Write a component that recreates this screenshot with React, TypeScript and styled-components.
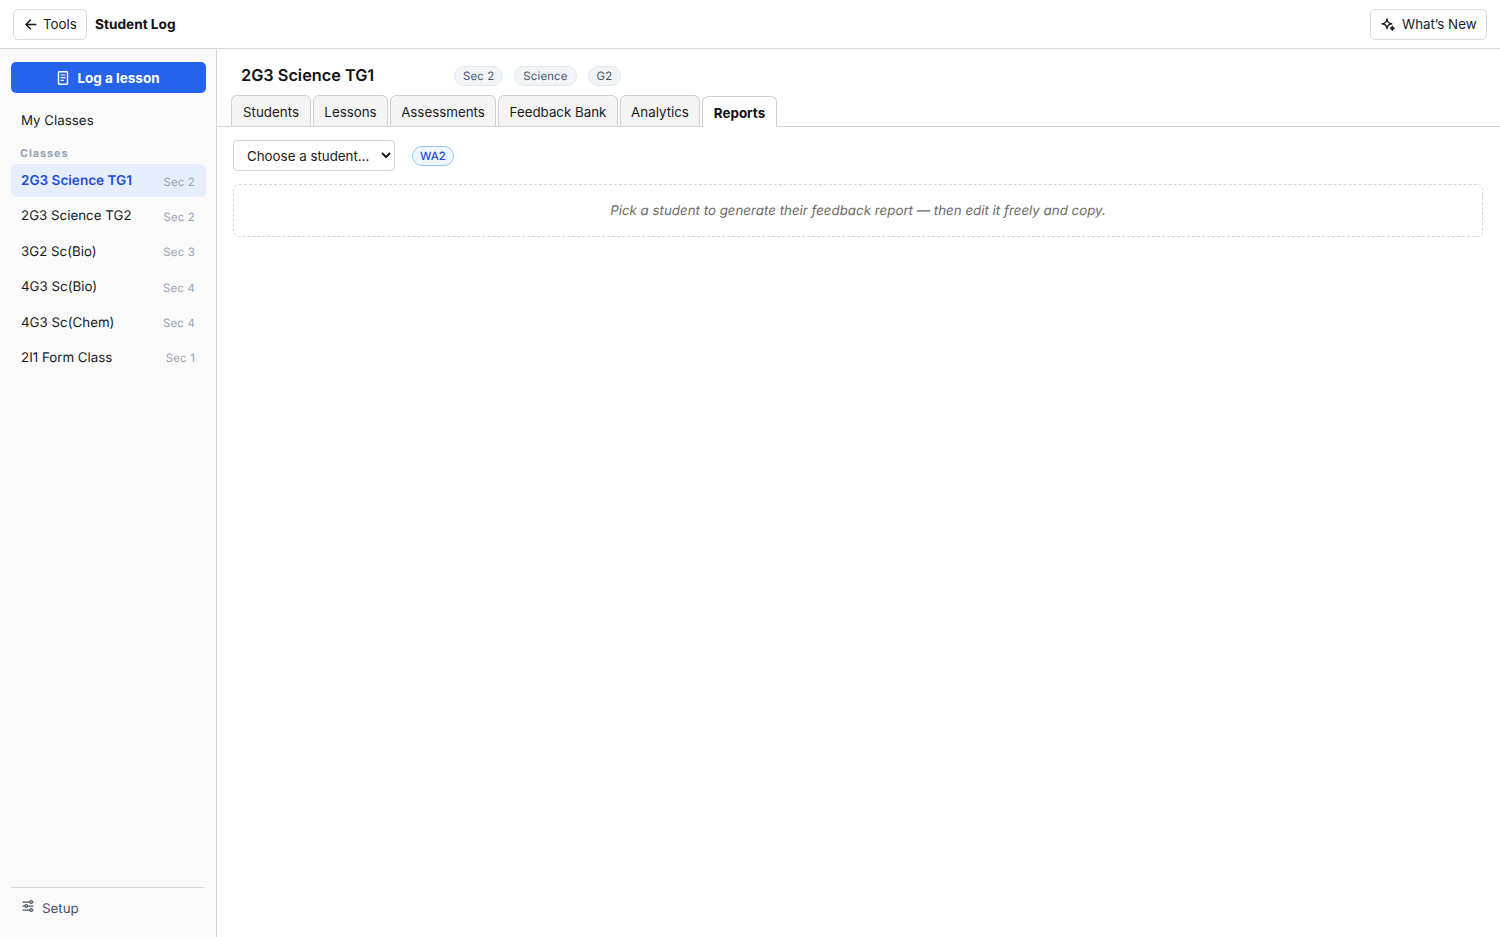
import React from 'react';
import styled, { createGlobalStyle, css } from 'styled-components';

const GlobalStyle = createGlobalStyle`
  *, *::before, *::after { box-sizing: border-box; }
  html, body, #root { height: 100%; }
  body {
    margin: 0;
    background: #fff;
    color: #1a1a1a;
    font-family: Inter, "Liberation Sans", sans-serif;
    font-size: 13.33px;
    line-height: 20px;
    text-rendering: geometricPrecision;
    overflow: hidden;
  }
  button, select { font: inherit; color: inherit; margin: 0; }
`;

const Page = styled.div`
  display: flex;
  flex-direction: column;
  height: 100%;
`;

const TopBar = styled.header`
  display: flex;
  align-items: center;
  flex: none;
  height: 49px;
  padding: 0 13px;
  border-bottom: 1px solid #d9d9d9;
`;

const OutlineButton = styled.button<{ $width: number; $gap: number }>`
  display: flex;
  align-items: center;
  width: ${(p) => p.$width}px;
  height: 31px;
  padding: 0 0 0 10px;
  gap: ${(p) => p.$gap}px;
  border: 1px solid #d9d9d9;
  border-radius: 5px;
  background: #fff;
  white-space: nowrap;
  svg { flex: none; }
`;

const AppTitle = styled.h1`
  flex: 1;
  margin: 0 0 0 8px;
  padding-top: 2px;
  font-size: 13.65px;
  font-weight: 700;
  color: #111;
`;

const Body = styled.div`
  display: flex;
  flex: 1;
  min-height: 0;
`;

const Sidebar = styled.aside`
  display: flex;
  flex-direction: column;
  flex: none;
  width: 217px;
  padding: 13px 11px 12px 11px;
  background: #fafafa;
  border-right: 1px solid #d5d5d5;
`;

const PrimaryButton = styled.button`
  display: flex;
  align-items: center;
  justify-content: center;
  flex: none;
  gap: 8px;
  width: 195px;
  height: 31px;
  padding: 0;
  border: 0;
  border-radius: 5px;
  background: #2563eb;
  color: #fff;
  font-size: 13.5px;
  font-weight: 700;
`;

const NavLink = styled.a`
  margin-top: 18px;
  padding-left: 10px;
  line-height: 20px;
`;

const SectionLabel = styled.h2`
  margin: 14px 0 1px;
  padding-left: 9px;
  font-size: 10.8px;
  line-height: 18px;
  font-weight: 700;
  letter-spacing: 0.95px;
  color: #94a3b8;
`;

const ClassList = styled.nav`
  display: flex;
  flex-direction: column;
  gap: 2.4px;
`;

const ClassRow = styled.a<{ $active?: boolean }>`
  display: flex;
  align-items: center;
  justify-content: space-between;
  width: 195px;
  height: 33px;
  padding: 1px 11px 0 10px;
  border-radius: 6px;
  ${(p) =>
    p.$active &&
    css`
      background: #e6eefd;
      color: #1d4ed8;
      font-size: 13.55px;
      font-weight: 600;
    `}
`;

const Level = styled.span`
  padding-top: 1px;
  font-size: 11.4px;
  font-weight: 400;
  letter-spacing: 0.2px;
  color: #94a3b8;
`;

const SidebarFooter = styled.div`
  display: flex;
  align-items: flex-start;
  width: 193px;
  height: 38px;
  margin-top: auto;
  padding: 11px 0 0 11px;
  gap: 8px;
  border-top: 1px solid #d9d9d9;
  color: #475569;
  svg { flex: none; margin-top: 1px; }
`;

const Main = styled.main`
  flex: 1;
  min-width: 0;
`;

const ClassHeader = styled.div`
  display: flex;
  align-items: center;
  height: 46px;
  padding: 7px 0 0 24px;
`;

const ClassName = styled.h2`
  width: 213px;
  margin: 0;
  padding-bottom: 1px;
  font-size: 16.3px;
  font-weight: 600;
  color: #111;
`;

const Tags = styled.div`
  display: flex;
  gap: 11px;
`;

const Tag = styled.span<{ $accent?: boolean }>`
  display: flex;
  align-items: center;
  height: 20px;
  padding: 0 ${(p) => (p.$accent ? 7 : 8)}px;
  border: 1px solid ${(p) => (p.$accent ? '#93c5fd' : '#e2e8f0')};
  border-radius: 10px;
  background: ${(p) => (p.$accent ? '#eff6ff' : '#f1f5f9')};
  color: ${(p) => (p.$accent ? '#1d4ed8' : '#475569')};
  font-size: 11.4px;
  font-weight: ${(p) => (p.$accent ? 500 : 400)};
  letter-spacing: ${(p) => (p.$accent ? 0 : 0.15)}px;
`;

const TabBar = styled.div`
  display: flex;
  align-items: flex-end;
  gap: 2px;
  height: 32px;
  padding-left: 14px;
  border-bottom: 1px solid #d5d5d5;
`;

const Tab = styled.button<{ $active?: boolean; $width: number }>`
  width: ${(p) => p.$width}px;
  height: 31px;
  padding: 1px 0 0;
  border: 1px solid #d0d0d0;
  border-bottom: 0;
  border-radius: 6px 6px 0 0;
  background: #f4f4f4;
  white-space: nowrap;
  ${(p) =>
    p.$active &&
    css`
      margin-bottom: -1px;
      background: #fff;
      color: #111;
      font-size: 13.4px;
      font-weight: 700;
    `}
`;

const Content = styled.section`
  padding: 13px 17px 0 16px;
`;

const Filters = styled.div`
  display: flex;
  align-items: center;
  gap: 17px;
`;

const StudentSelect = styled.select`
  width: 162px;
  height: 31px;
  padding: 0 0 0 9px;
  border: 1px solid #d5d5d5;
  border-radius: 4px;
  background: #fff;
`;

const EmptyState = styled.div`
  display: flex;
  align-items: center;
  justify-content: center;
  height: 53px;
  margin-top: 13px;
  padding-top: 1px;
  border: 1px dashed #d5d5d5;
  border-radius: 6px;
  color: #6b6b6b;
  font-style: italic;
`;

const ArrowIcon = () => (
  <svg width="14" height="14" viewBox="0 0 14 14" fill="none" stroke="currentColor" strokeWidth="1.5">
    <path d="M12.3 7.5H2M6.8 2.7 2 7.5l4.8 4.8" />
  </svg>
);

const SparkleIcon = () => (
  <svg width="15" height="15" viewBox="0 0 15 15" fill="none" stroke="currentColor" strokeWidth="1.4">
    <path d="M6 2Q6.5 6.3 10.6 6.8Q6.5 7.3 6 11.6Q5.5 7.3 1.2 6.8Q5.5 6.3 6 2Z" strokeLinejoin="round" />
    <path d="M11.3 8.7Q11.9 10.6 13.8 11.2Q11.9 11.8 11.3 13.7Q10.7 11.8 8.8 11.2Q10.7 10.6 11.3 8.7Z" fill="currentColor" strokeWidth="0.6" />
  </svg>
);

const NoteIcon = () => (
  <svg width="12" height="14" viewBox="0 0 12 14" fill="none" stroke="currentColor" strokeWidth="1.4">
    <rect x="1.5" y="0.8" width="9" height="12.4" rx="0.6" />
    <path d="M3.6 4h4.8M3.6 6.7h4.8M3.6 9.4h3.2" strokeWidth="1.2" />
  </svg>
);

const SlidersIcon = () => (
  <svg width="12" height="12" viewBox="0 0 12 12" fill="none" stroke="currentColor" strokeWidth="1.25">
    <path d="M.5 2h7.3M10.5 2h1M.5 6h2.3M5.6 6h5.9M.5 10h7.3M10.5 10h1" />
    <circle cx="9.1" cy="2" r="1.3" />
    <circle cx="4.2" cy="6" r="1.3" />
    <circle cx="9.1" cy="10" r="1.3" />
  </svg>
);

const classes = [
  { name: '2G3 Science TG1', level: 'Sec 2' },
  { name: '2G3 Science TG2', level: 'Sec 2' },
  { name: '3G2 Sc(Bio)', level: 'Sec 3' },
  { name: '4G3 Sc(Bio)', level: 'Sec 4' },
  { name: '4G3 Sc(Chem)', level: 'Sec 4' },
  { name: '2I1 Form Class', level: 'Sec 1' },
];

const tabs = [
  { label: 'Students', width: 80 },
  { label: 'Lessons', width: 75 },
  { label: 'Assessments', width: 106 },
  { label: 'Feedback Bank', width: 120 },
  { label: 'Analytics', width: 80 },
  { label: 'Reports', width: 75 },
];

export default function App() {
  return (
    <Page>
      <GlobalStyle />
      <TopBar>
        <OutlineButton $width={74} $gap={5}>
          <ArrowIcon />
          Tools
        </OutlineButton>
        <AppTitle>Student Log</AppTitle>
        <OutlineButton $width={117} $gap={6}>
          <SparkleIcon />
          What’s New
        </OutlineButton>
      </TopBar>
      <Body>
        <Sidebar>
          <PrimaryButton>
            <NoteIcon />
            Log a lesson
          </PrimaryButton>
          <NavLink>My Classes</NavLink>
          <SectionLabel>Classes</SectionLabel>
          <ClassList>
            {classes.map((c, i) => (
              <ClassRow key={c.name} $active={i === 0}>
                {c.name}
                <Level>{c.level}</Level>
              </ClassRow>
            ))}
          </ClassList>
          <SidebarFooter>
            <SlidersIcon />
            Setup
          </SidebarFooter>
        </Sidebar>
        <Main>
          <ClassHeader>
            <ClassName>2G3 Science TG1</ClassName>
            <Tags>
              <Tag>Sec 2</Tag>
              <Tag>Science</Tag>
              <Tag>G2</Tag>
            </Tags>
          </ClassHeader>
          <TabBar>
            {tabs.map((t) => (
              <Tab key={t.label} $width={t.width} $active={t.label === 'Reports'}>
                {t.label}
              </Tab>
            ))}
          </TabBar>
          <Content>
            <Filters>
              <StudentSelect defaultValue="">
                <option value="">Choose a student…</option>
              </StudentSelect>
              <Tag $accent>WA2</Tag>
            </Filters>
            <EmptyState>Pick a student to generate their feedback report — then edit it freely and copy.</EmptyState>
          </Content>
        </Main>
      </Body>
    </Page>
  );
}
